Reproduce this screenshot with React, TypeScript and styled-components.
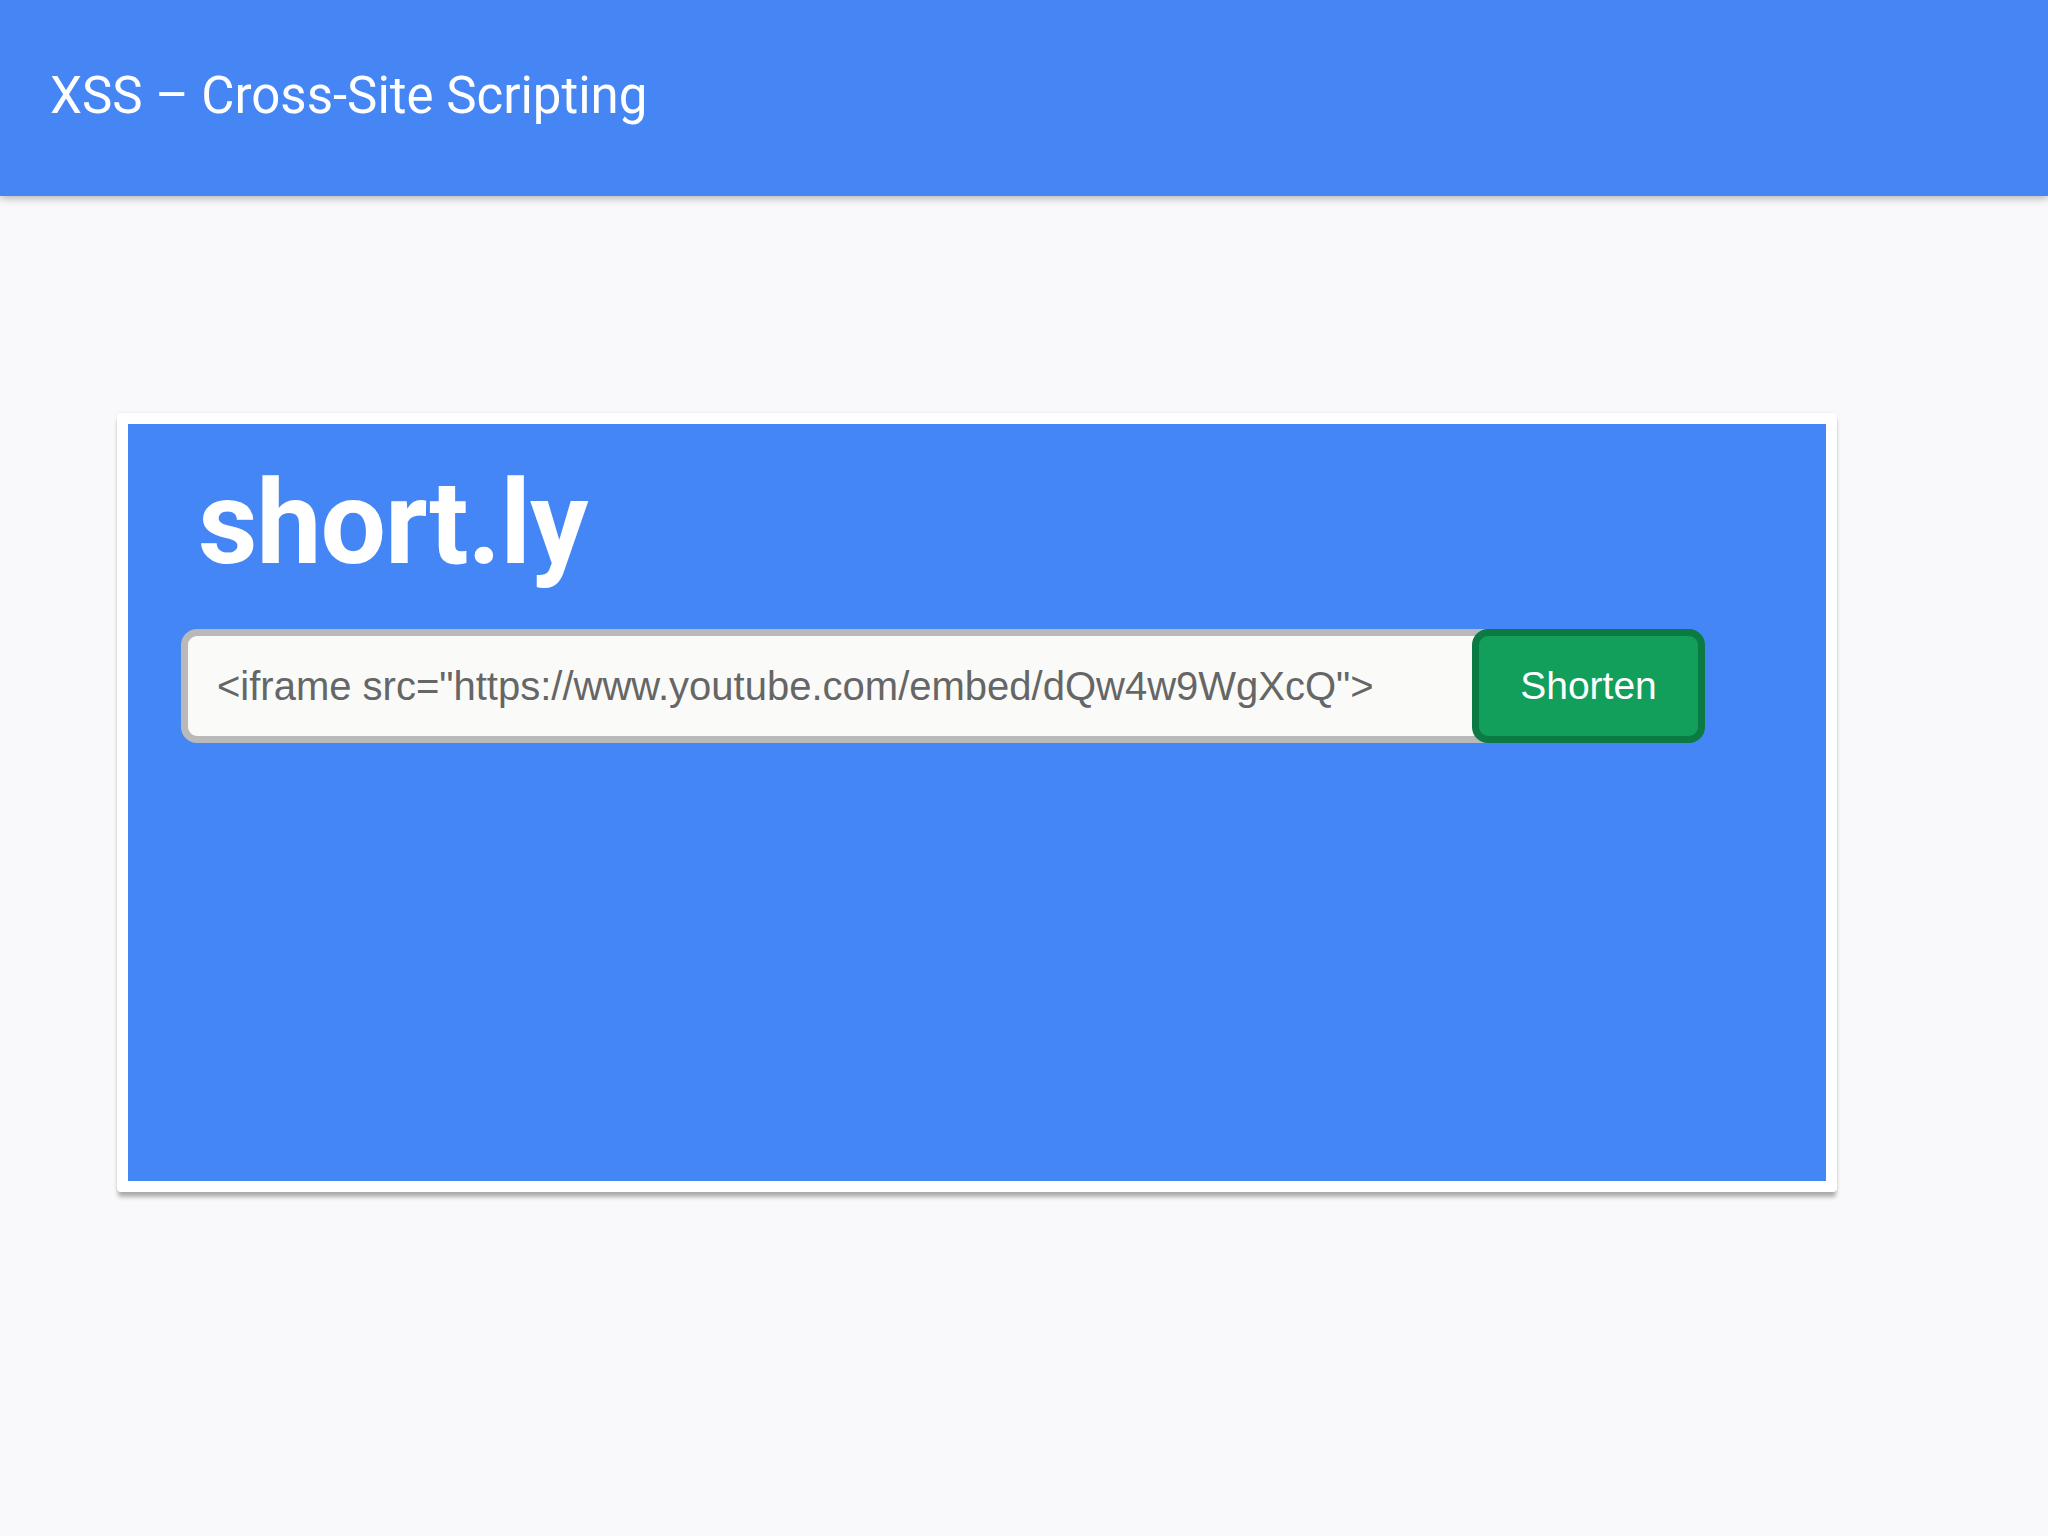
import React, {useState} from 'react'
import styled, {createGlobalStyle} from 'styled-components'

const GlobalStyle = createGlobalStyle`
  html, body {
    margin: 0;
    padding: 0;
    background: #f9f9fb;
    font-family: Roboto, "Liberation Sans", Arial, sans-serif;
  }
  * {
    box-sizing: border-box;
  }
`

const App = () => {
  const [url, setUrl] = useState('<iframe src="https://www.youtube.com/embed/dQw4w9WgXcQ">')

  return (
    <Page>
      <GlobalStyle />
      <TopBar>
        <Title>XSS – Cross-Site Scripting</Title>
      </TopBar>
      <Main>
        <Frame>
          <Panel>
            <Brand>short.ly</Brand>
            <Form onSubmit={(e) => e.preventDefault()}>
              <UrlInput
                type="text"
                value={url}
                onChange={(e) => setUrl(e.target.value)}
              />
              <ShortenButton type="submit">Shorten</ShortenButton>
            </Form>
          </Panel>
        </Frame>
      </Main>
    </Page>
  )
}

export default App

const Page = styled.div`
  min-height: 1536px;
  background: #f9f9fb;
`

const TopBar = styled.header`
  height: 196px;
  background: #4586f4;
  display: flex;
  align-items: center;
  padding: 0 0 6px 50px;
  box-shadow: 0 2px 8px rgba(0, 0, 0, 0.3);
  position: relative;
`

const Title = styled.h1`
  margin: 0;
  font-family: Roboto, sans-serif;
  font-weight: 400;
  font-size: 51px;
  color: #fff;
`

const Main = styled.main`
  padding: 217px 0 0 117px;
`

const Frame = styled.div`
  width: 1720px;
  height: 779px;
  padding: 11px;
  background: #fff;
  border-radius: 4px;
  box-shadow: 0 6px 4px -1px rgba(0, 0, 0, 0.3), 0 0 3px rgba(0, 0, 0, 0.08);
`

const Panel = styled.section`
  height: 100%;
  background: #4486f5;
  padding: 31px 0 0 53px;
`

const Brand = styled.h2`
  margin: 0 0 38px 17px;
  font-family: Roboto, sans-serif;
  font-weight: 700;
  font-size: 116px;
  color: #fff;
  letter-spacing: -1px;
`

const Form = styled.form`
  display: flex;
  align-items: stretch;
  height: 114px;
`

const UrlInput = styled.input`
  width: 1320px;
  height: 114px;
  border: 7px solid #b9b9b9;
  border-radius: 16px;
  background: #fafbf9;
  padding: 0 20px 0 29px;
  font-family: "Liberation Sans", Arial, sans-serif;
  font-size: 40px;
  color: #666;
  outline: none;
`

const ShortenButton = styled.button`
  width: 233px;
  height: 114px;
  margin-left: -29px;
  position: relative;
  border: 7px solid #0b7b43;
  border-radius: 16px;
  background: #129e5b;
  color: #fff;
  font-family: "Liberation Sans", Arial, sans-serif;
  font-size: 39px;
  padding: 0;
  cursor: pointer;
`
